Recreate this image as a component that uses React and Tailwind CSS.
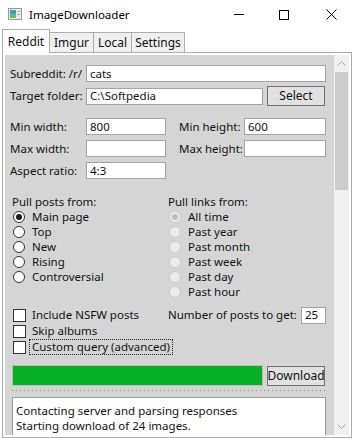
import React from "react";

const font = { fontFamily: '"Noto Sans", "Liberation Sans", sans-serif' };

function Field({ className = "", value = "" }) {
  return (
    <div
      className={`h-[17px] bg-white border border-[#a3a3a3] flex items-center px-[3px] leading-none ${className}`}
    >
      {value}
    </div>
  );
}

function Radio({ label, checked, faint }) {
  return (
    <div className="h-[15px] flex items-center whitespace-nowrap">
      <div
        className={`w-[12px] h-[12px] ml-[1px] rounded-full border flex items-center justify-center ${
          faint ? "border-[#cacaca] bg-[#ececec]" : "border-[#333] bg-white"
        }`}
      >
        {checked && (
          <div
            className={`w-[6px] h-[6px] rounded-full ${
              faint ? "bg-[#bdbdbd]" : "bg-[#1a1a1a]"
            }`}
          />
        )}
      </div>
      <span className="ml-[7px]">{label}</span>
    </div>
  );
}

function Check({ label, focus }) {
  return (
    <div className="h-[16px] flex items-center whitespace-nowrap">
      <div className="w-[13px] h-[13px] ml-[1px] shrink-0 bg-white border border-[#333]" />
      <span
        className={`ml-[3px] px-[2px] leading-[14px] ${
          focus ? "border border-dotted border-[#222]" : "border border-transparent"
        }`}
      >
        {label}
      </span>
    </div>
  );
}

function AppIcon() {
  return (
    <svg width="14" height="12" viewBox="0 0 14 12">
      <rect x="0.5" y="0.5" width="13" height="11" fill="#e8e8e8" stroke="#9a9a9a" />
      <rect x="2" y="2" width="6" height="8" fill="#4a9bb5" />
      <rect x="2" y="6" width="6" height="4" fill="#6bb86a" />
      <rect x="9.5" y="3" width="2.5" height="1" fill="#8aa" />
      <rect x="9.5" y="6" width="2.5" height="1" fill="#8aa" />
    </svg>
  );
}

export default function App() {
  return (
    <div
      className="w-[354px] h-[438px] bg-white overflow-hidden relative text-[11.5px] text-[#111]"
      style={font}
    >
      {/* Title bar */}
      <div className="h-[29px] flex items-center">
        <div className="ml-[8px] mt-[-1px]">
          <AppIcon />
        </div>
        <span className="ml-[7px] text-[11.5px] text-black">ImageDownloader</span>
        <div className="ml-auto flex items-center h-full">
          <div className="w-[46px] flex justify-center">
            <div className="w-[10px] h-[1px] bg-black" />
          </div>
          <div className="w-[46px] flex justify-center pr-[3px]">
            <div className="w-[10px] h-[10px] border border-black" />
          </div>
          <div className="w-[46px] flex justify-center">
            <svg width="11" height="11" viewBox="0 0 11 11">
              <path d="M0.5 0.5 L10.5 10.5 M10.5 0.5 L0.5 10.5" stroke="#000" strokeWidth="1" />
            </svg>
          </div>
        </div>
      </div>

      {/* Tabs */}
      <div className="h-[23px] flex items-end pl-[2px] relative z-10">
        <div className="h-[24px] w-[48px] bg-white border border-[#acacac] border-b-0 flex items-center justify-center mb-[-1px] text-[12px]">
          Reddit
        </div>
        <div className="h-[20px] w-[44px] bg-[#f0f0f0] border border-l-0 border-[#acacac] border-b-0 flex items-center justify-center text-[12px]">
          Imgur
        </div>
        <div className="h-[20px] w-[38px] bg-[#f0f0f0] border border-l-0 border-[#acacac] border-b-0 flex items-center justify-center text-[12px]">
          Local
        </div>
        <div className="h-[20px] w-[53px] bg-[#f0f0f0] border border-l-0 border-[#acacac] border-b-0 flex items-center justify-center text-[12px]">
          Settings
        </div>
      </div>

      {/* Tab content */}
      <div className="ml-[2px] w-[350px] h-[386px] border border-[#acacac] p-[2px] flex">
        <div className="flex-1 bg-[#d5d5d5] pl-[5px] pr-[8px] pt-[10px] overflow-hidden">
          <div className="flex items-center h-[17px]">
            <span className="w-[76px]">Subreddit: /r/</span>
            <Field className="flex-1" value="cats" />
          </div>
          <div className="flex items-center h-[20px] mt-[4px]">
            <span className="w-[76px]">Target folder:</span>
            <Field className="w-[177px]" value="C:\Softpedia" />
            <div className="ml-[4px] w-[58px] h-[20px] bg-[#e1e1e1] border border-[#707070] flex items-center justify-center text-[12px]">
              Select
            </div>
          </div>

          <div className="mt-[12px] flex flex-col gap-[5px]">
            <div className="flex items-center h-[17px]">
              <span className="w-[76px]">Min width:</span>
              <Field className="w-[80px]" value="800" />
              <span className="ml-[13px] w-[65px]">Min height:</span>
              <Field className="flex-1" value="600" />
            </div>
            <div className="flex items-center h-[17px]">
              <span className="w-[76px]">Max width:</span>
              <Field className="w-[80px]" />
              <span className="ml-[13px] w-[65px] whitespace-nowrap">Max height:</span>
              <Field className="flex-1" />
            </div>
            <div className="flex items-center h-[17px]">
              <span className="w-[76px]">Aspect ratio:</span>
              <Field className="w-[80px]" value="4:3" />
            </div>
          </div>

          <div className="mt-[15px] flex pl-[2px]">
            <div className="w-[156px]">
              <div className="h-[15px] leading-[15px]">Pull posts from:</div>
              <Radio label="Main page" checked />
              <Radio label="Top" />
              <Radio label="New" />
              <Radio label="Rising" />
              <Radio label="Controversial" />
            </div>
            <div className="flex-1">
              <div className="h-[15px] leading-[15px]">Pull links from:</div>
              <Radio label="All time" checked faint />
              <Radio label="Past year" faint />
              <Radio label="Past month" faint />
              <Radio label="Past week" faint />
              <Radio label="Past day" faint />
              <Radio label="Past hour" faint />
            </div>
          </div>

          <div className="mt-[8px] flex pl-[2px]">
            <div className="w-[156px]">
              <Check label="Include NSFW posts" />
              <Check label="Skip albums" />
              <Check label="Custom query (advanced)" focus />
            </div>
            <div className="flex-1 flex items-start">
              <div className="h-[16px] flex items-center whitespace-nowrap">
                <span>Number of posts to get:</span>
                <Field className="ml-[4px] w-[25px] h-[16px]" value="25" />
              </div>
            </div>
          </div>

          <div className="mt-[10px] ml-[2px] flex items-center">
            <div className="w-[251px] h-[21px] border border-[#bcbcbc] bg-[#e6e6e6]">
              <div className="h-full w-full bg-[#06b025]" />
            </div>
            <div className="ml-[4px] w-[58px] h-[20px] bg-[#e1e1e1] border border-[#707070] flex items-center justify-center text-[12px]">
              Download
            </div>
          </div>

          <div className="mt-[4px] ml-[2px] h-[1px] bg-[linear-gradient(to_right,#8a8a8a_1px,transparent_1px)] bg-[length:4px_1px]" />

          <div className="mt-[6px] ml-[2px] h-[60px] bg-white border border-[#9a9a9a] pl-[3px] pt-[5px] leading-[15px]">
            <div>Contacting server and parsing responses</div>
            <div>Starting download of 24 images.</div>
          </div>
        </div>

        {/* Scrollbar */}
        <div className="w-[15px] bg-[#f0f0f0] flex flex-col">
          <div className="h-[17px] flex items-center justify-center">
            <svg width="9" height="5" viewBox="0 0 9 5">
              <path d="M0.5 4.5 L4.5 0.5 L8.5 4.5" stroke="#a6a6a6" fill="none" />
            </svg>
          </div>
          <div className="mx-[1px] h-[118px] bg-[#cdcdcd]" />
          <div className="flex-1" />
          <div className="h-[17px] flex items-center justify-center">
            <svg width="9" height="5" viewBox="0 0 9 5">
              <path d="M0.5 0.5 L4.5 4.5 L8.5 0.5" stroke="#a6a6a6" fill="none" />
            </svg>
          </div>
        </div>
      </div>
    </div>
  );
}
